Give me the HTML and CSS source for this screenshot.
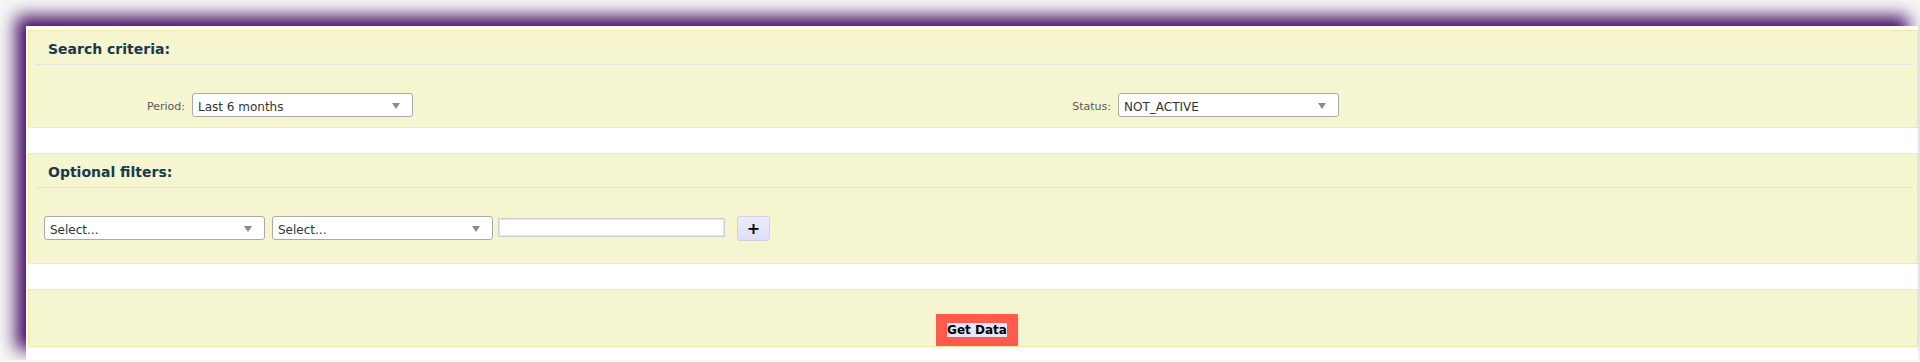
FILE: index.html
```html
<!DOCTYPE html>
<html lang="en">
<head>
<meta charset="utf-8">
<title>Search</title>
<link rel="stylesheet" href="styles.css">
</head>
<body>
<div class="page">
  <section class="panel">
    <div class="panel-head"><h2>Search criteria:</h2></div>
    <div class="criteria-row">
      <div class="field">
        <label class="field-label">Period:</label>
        <div class="select"><span>Last 6 months</span><svg class="arrow" width="8" height="6" viewBox="0 0 8 6"><polygon points="0,0 8,0 4,6" fill="#8a8a8a"/></svg></div>
      </div>
      <div class="field">
        <label class="field-label">Status:</label>
        <div class="select"><span>NOT_ACTIVE</span><svg class="arrow" width="8" height="6" viewBox="0 0 8 6"><polygon points="0,0 8,0 4,6" fill="#8a8a8a"/></svg></div>
      </div>
    </div>
  </section>

  <section class="panel">
    <div class="panel-head"><h2>Optional filters:</h2></div>
    <div class="filter-row">
      <div class="select"><span>Select...</span><svg class="arrow" width="8" height="6" viewBox="0 0 8 6"><polygon points="0,0 8,0 4,6" fill="#8a8a8a"/></svg></div>
      <div class="select"><span>Select...</span><svg class="arrow" width="8" height="6" viewBox="0 0 8 6"><polygon points="0,0 8,0 4,6" fill="#8a8a8a"/></svg></div>
      <input class="text-input" type="text">
      <button class="add-btn" type="button">+</button>
    </div>
  </section>

  <section class="panel panel-action">
    <button class="get-btn" type="button"><span>Get Data</span></button>
  </section>
</div>
</body>
</html>
```

FILE: styles.css
```css
* { box-sizing: border-box; }

html, body {
  margin: 0;
  padding: 0;
  background: #f6f6f6;
  font-family: "DejaVu Sans", Verdana, sans-serif;
}

.page {
  margin: 26px 2px 0 26px;
  height: 334px;
  background: #ffffff;
  box-shadow: -10px -10px 16px #460e64;
  padding: 4px 0 0 2px;
}

.panel {
  background: #f5f5d0;
  border: 1px solid #fde6a2;
  margin-bottom: 25px;
}

.panel-head {
  height: 34px;
  margin: 0 4px 0 6px;
  border-bottom: 1px solid #e3e3ea;
  padding: 3px 0 0 13px;
}

.panel-head h2 {
  margin: 0;
  font-size: 14px;
  line-height: 30px;
  font-weight: bold;
  color: #173a4c;
}

.criteria-row {
  height: 62px;
  padding-top: 28px;
  display: grid;
  grid-template-columns: 926px 1fr;
  align-items: start;
}

.field {
  display: flex;
  align-items: center;
}

.field-label {
  width: 163px;
  padding: 2px 7px 0 0;
  text-align: right;
  font-size: 11px;
  color: #5a5a5a;
}

.select {
  width: 221px;
  height: 24px;
  border: 1px solid #aaaaaa;
  border-radius: 3px;
  background: #ffffff;
  display: flex;
  align-items: flex-start;
  justify-content: space-between;
  padding: 0 12px 0 5px;
  font-size: 12px;
  color: #333333;
}

.select span {
  line-height: 22px;
  padding-top: 2px;
}

.arrow {
  display: block;
  align-self: center;
  margin-top: 1px;
}

.filter-row {
  height: 75px;
  padding: 28px 0 0 15px;
  display: flex;
  align-items: flex-start;
}

.filter-row .select + .select { margin-left: 7px; }

.text-input {
  margin: 2px 0 0 5px;
  width: 227px;
  height: 19px;
  border: 1px solid #cfcfcf;
  box-shadow: inset 0 0 0 1px #e6e6e6;
  background: #ffffff;
  padding: 0 4px;
  font-family: inherit;
  font-size: 12px;
}

.add-btn {
  margin-left: 12px;
  width: 33px;
  height: 25px;
  border: 1px solid #d2d2dc;
  border-radius: 3px;
  background: linear-gradient(#ececfc, #dedef6);
  font-family: inherit;
  font-size: 16px;
  font-weight: bold;
  color: #000000;
  padding: 0;
  line-height: 22px;
}

.panel-action {
  height: 58px;
  padding-top: 24px;
  text-align: center;
  margin-bottom: 0;
}

.get-btn {
  width: 82px;
  height: 32px;
  border: none;
  background: #ff5a4b;
  padding: 0;
  margin-left: 8px;
  font-family: inherit;
  font-size: 12px;
  font-weight: bold;
  color: #000000;
}

.get-btn span {
  background: #e6e6fa;
}
```
